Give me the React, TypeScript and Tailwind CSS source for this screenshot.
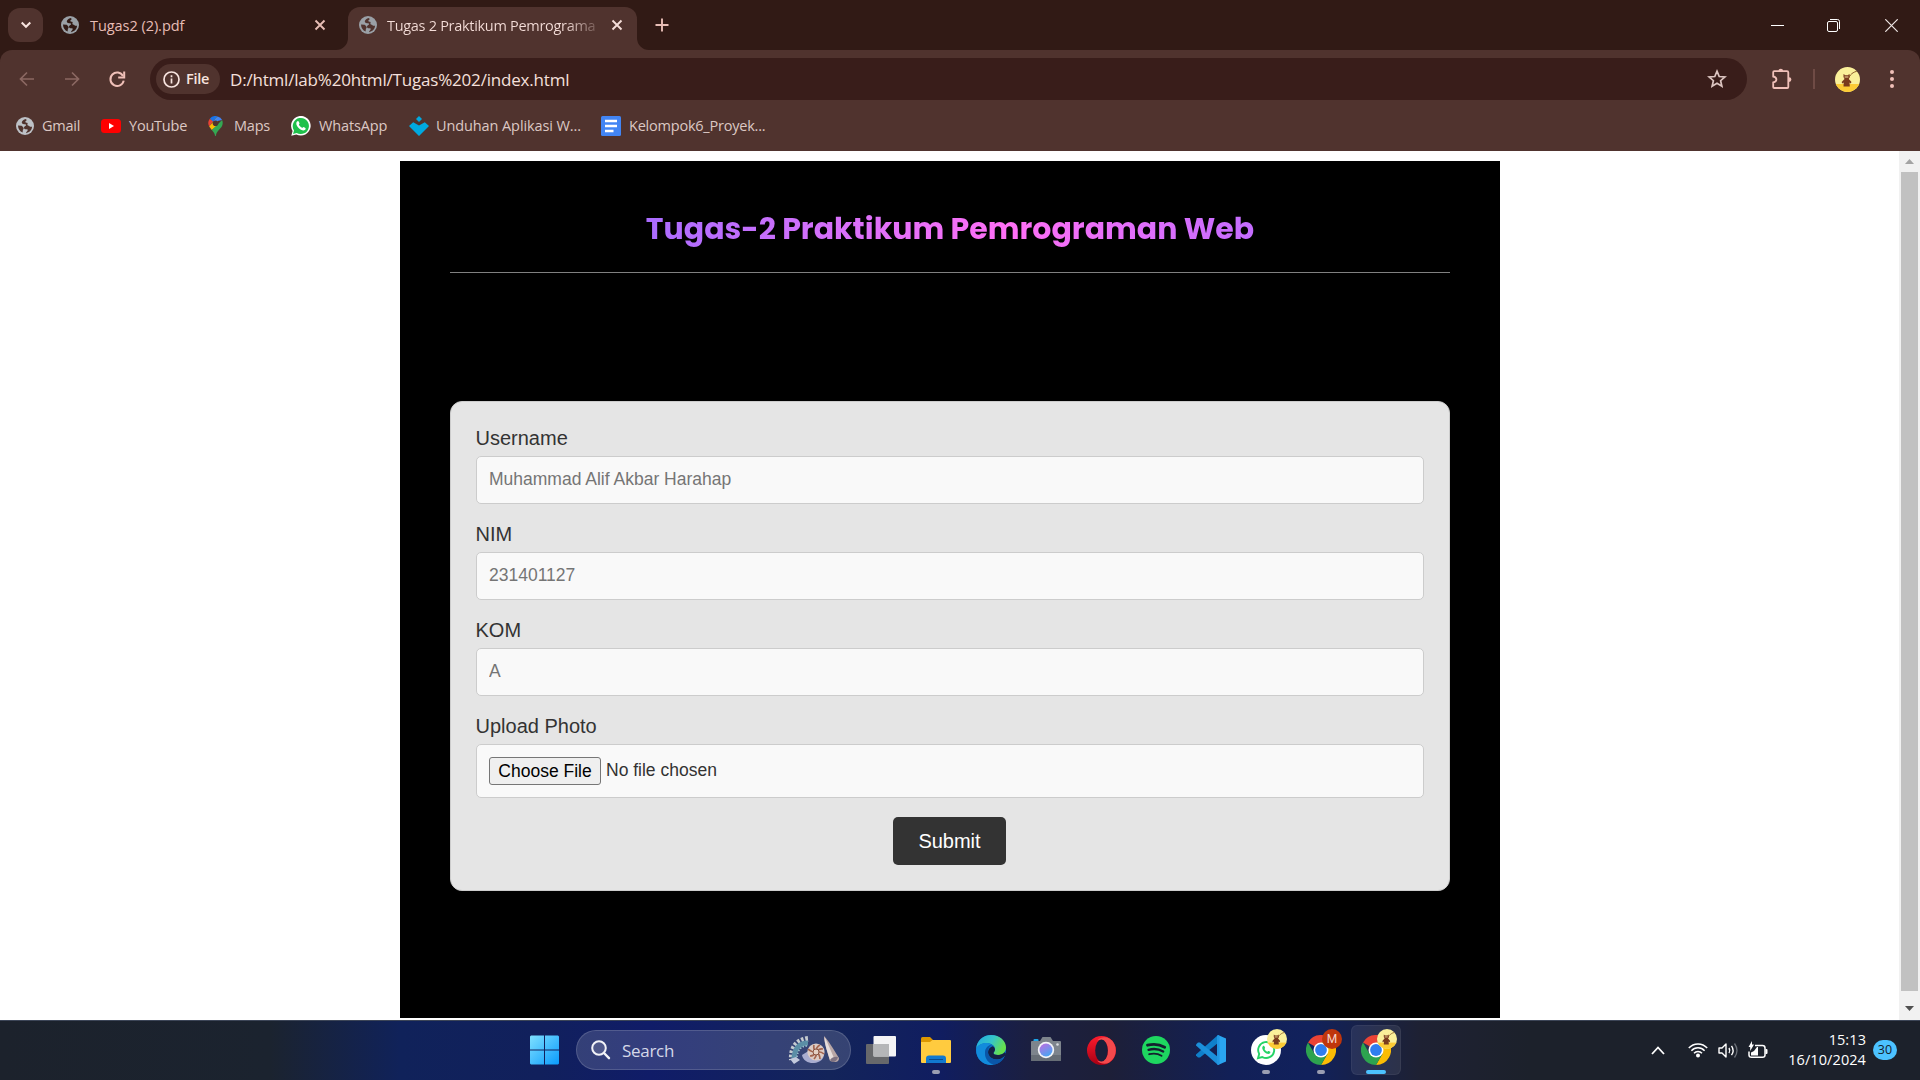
import React from "react";
import type { ReactNode } from "react";

const SEGOE = "font-['Open_Sans','Noto_Sans',sans-serif]";

function Globe({ color, hole, size = 18 }: { color: string; hole: string; size?: number }) {
  return (
    <svg width={size} height={size} viewBox="0 0 18 18" className="shrink-0">
      <circle cx="9" cy="9" r="9" fill={color} />
      <path
        d="M9.500 2C7 3 5.600 4.200 5.800 5.700c.2 1.500 2 1.500 3.300 1.600 1 .1 1.300.7.800 1.300-.8.700-1.900.9-1.900 2.200 0 1.100 1 1.500 2.300 1.500l1.400.3c.3 1-.6 1.700-1.300 2.500l-.4 1.100c2.500-.4 4.600-1.900 5.600-4.100l.5-2.400c-1.200.1-2 .1-2.700-.5-.6-.6-1.200-.3-1.800-.9-.6-.7.300-1.200 0-2-.4-.8-1.600-.3-2.200-1-.5-.8.900-1.600 1.500-2.300z"
        fill={hole}
      />
      <path d="M2 8.500l3.500.3c1 .3 1 1.300 1.800 1.800.7.500.3 1.600-.4 2.200l-.3 2.700C3.800 14.300 2.100 12 2 8.500z" fill={hole} />
    </svg>
  );
}

function CloseX({ color }: { color: string }) {
  return (
    <svg width="12" height="12" viewBox="0 0 12 12" className="shrink-0">
      <path d="M1.500 1.500l9 9M10.500 1.500l-9 9" stroke={color} strokeWidth="1.900" />
    </svg>
  );
}

function Avatar({ size }: { size: number }) {
  return (
    <svg width={size} height={size} viewBox="0 0 25 25" className="shrink-0">
      <defs>
        <clipPath id={"av" + size}>
          <circle cx="12.500" cy="12.500" r="12.500" />
        </clipPath>
      </defs>
      <g clipPath={`url(#av${size})`}>
        <rect width="25" height="25" fill="#faf09a" />
        <rect y="17" width="25" height="8" fill="#fccb35" />
        <path d="M12 14C15 7 18 5 23 4" fill="none" stroke="#8a5a2a" strokeWidth="1" />
        <path d="M8.500 7l1.500 1h3l1.500-1 .3 3-1 2 2.700 3-.8 1.500-1.200-1 .3 4H8.500l.2-4-1.500 1-.5-1.500 2.800-3-1-2z" fill="#7a3b1d" />
        <path d="M9.600 8.500h3.800v2.500H9.600z" fill="#b78a5c" />
      </g>
    </svg>
  );
}

function Tabs() {
  return (
    <div className={`${SEGOE} flex h-[50px] shrink-0 items-center bg-[#311a15] text-[15px]`}>
      <button className="ml-2 flex h-[34px] w-[35px] items-center justify-center rounded-[12px] bg-[#50332e]">
        <svg width="12" height="8" viewBox="0 0 12 8">
          <path d="M1.700 1.500L6 5.800l4.300-4.300" fill="none" stroke="#f8e4df" strokeWidth="2" />
        </svg>
      </button>
      <div className="ml-[18px] flex w-[269px] items-center">
        <Globe color="#9aa0a6" hole="#311a15" />
        <span className="ml-[11px] flex-1 pt-px text-[14.500px] tracking-[-0.050px] whitespace-nowrap text-[#e7bdb5]">Tugas2 (2).pdf</span>
        <span className="mr-[4px] flex">
          <CloseX color="#e7bdb5" />
        </span>
      </div>
      <div className="relative ml-[18px] flex h-[43px] w-[289px] items-center self-end rounded-t-[12px] bg-[#50332e]">
        <svg className="absolute bottom-0 -left-3" width="12" height="12" viewBox="0 0 12 12">
          <path d="M12 0v12H0A12 12 0 0 0 12 0z" fill="#50332e" />
        </svg>
        <svg className="absolute -right-3 bottom-0" width="12" height="12" viewBox="0 0 12 12">
          <path d="M0 0v12h12A12 12 0 0 1 0 0z" fill="#50332e" />
        </svg>
        <span className="-mt-[7px] ml-[11px] flex">
          <Globe color="#9aa0a6" hole="#50332e" />
        </span>
        <span className="-mt-[6px] ml-[10px] w-[210px] bg-linear-to-r from-[#f5ded9] from-85% to-[#f5ded9]/20 bg-clip-text text-[14.500px] tracking-[-0.300px] whitespace-nowrap text-transparent">
          Tugas 2 Praktikum Pemrograma
        </span>
        <span className="-mt-[7px] ml-[14px] flex">
          <CloseX color="#f5ded9" />
        </span>
      </div>
      <svg width="14" height="14" viewBox="0 0 14 14" className="ml-[18px]">
        <path d="M7 .5v13M.5 7h13" stroke="#e7bdb5" strokeWidth="1.900" />
      </svg>
      <div className="ml-auto flex items-center">
        <svg width="13" height="13" viewBox="0 0 13 13">
          <path d="M0 6.500h13" stroke="#fff" strokeWidth="1" />
        </svg>
        <svg width="13" height="13" viewBox="0 0 13 13" className="ml-[43px]">
          <rect x=".5" y="2.500" width="10" height="10" rx="1.500" fill="none" stroke="#fff" />
          <path d="M3 .5h7.500a2 2 0 0 1 2 2V10" fill="none" stroke="#fff" />
        </svg>
        <svg width="13" height="13" viewBox="0 0 13 13" className="mr-[22px] ml-[45px]">
          <path d="M.3.3l12.400 12.400M12.700.3L.3 12.700" stroke="#efe7e5" strokeWidth="1.200" />
        </svg>
      </div>
    </div>
  );
}

function Toolbar() {
  return (
    <div className={`${SEGOE} flex h-[58px] shrink-0 items-center rounded-t-[12px] bg-[#50332e]`}>
      <svg width="16" height="16" viewBox="0 0 16 16" className="ml-[19px]">
        <path d="M15 8H2M8 1.500L1.500 8 8 14.500" fill="none" stroke="#8b6862" strokeWidth="1.700" />
      </svg>
      <svg width="16" height="16" viewBox="0 0 16 16" className="ml-[29px]">
        <path d="M1 8h13M8 1.500L14.500 8 8 14.500" fill="none" stroke="#8b6862" strokeWidth="1.700" />
      </svg>
      <svg width="18" height="18" viewBox="0 0 18 18" className="ml-[28px]">
        <path d="M15 6A6.700 6.700 0 1 0 15.700 10.600" fill="none" stroke="#f0c0b8" strokeWidth="2" />
        <path d="M16.200 1.500v6h-6" fill="none" stroke="#f0c0b8" strokeWidth="2" />
      </svg>
      <div className="ml-[24px] flex h-[42px] w-[1597px] items-center rounded-full bg-[#391d1a]">
        <div className="ml-[6px] flex h-[30px] w-[64px] items-center rounded-full bg-[#50332e]">
          <svg width="17" height="17" viewBox="0 0 17 17" className="ml-[7px]">
            <circle cx="8.500" cy="8.500" r="7.500" fill="none" stroke="#f8e4df" strokeWidth="1.700" />
            <path d="M8.500 7.500v5M8.500 4.300v1.900" stroke="#f8e4df" strokeWidth="1.700" />
          </svg>
          <span className="ml-[6px] text-[14.500px] font-semibold tracking-[-0.300px] text-[#f8e4df]">File</span>
        </div>
        <span className="ml-[10px] pt-px text-[17px] tracking-[-0.190px] whitespace-nowrap text-[#f5e0dc]">D:/html/lab%20html/Tugas%202/index.html</span>
        <svg width="20" height="20" viewBox="0 0 20 20" className="mr-[20px] ml-auto">
          <path
            d="M10 2.200l2.200 5.300 5.700.5-4.300 3.700 1.300 5.600-4.900-3-4.900 3 1.300-5.600L2.100 8l5.700-.5z"
            fill="none"
            stroke="#dcc5c1"
            strokeWidth="1.700"
          />
        </svg>
      </div>
      <svg width="22" height="22" viewBox="0 0 22 22" className="ml-[24px]">
        <path
          d="M2.200 4.200q0-1 1-1H16q1.300 0 1.300 1.300V19q0 1-1 1H3.200q-1 0-1-1v-4.500c2.200-.5 3.200-1.600 3.200-3s-1-2.500-3.200-3z"
          fill="none"
          stroke="#f0c0b8"
          strokeWidth="1.800"
        />
        <path d="M7.500 3a2.300 2.300 0 0 1 4.600 0zM18 9.200a2.400 2.400 0 0 1 0 4.800z" fill="#f0c0b8" />
      </svg>
      <div className="ml-[20px] h-5 w-[2px] bg-[#6f4b45]" />
      <span className="ml-[20px] flex">
        <Avatar size={25} />
      </span>
      <svg width="4" height="20" viewBox="0 0 4 20" className="ml-[30px]">
        <circle cx="2" cy="3" r="2" fill="#f0c0b8" />
        <circle cx="2" cy="10" r="2" fill="#f0c0b8" />
        <circle cx="2" cy="17" r="2" fill="#f0c0b8" />
      </svg>
    </div>
  );
}

function Bookmark({ icon, label, className }: { icon: ReactNode; label: string; className: string }) {
  return (
    <div className={`flex items-center whitespace-nowrap ${className}`}>
      {icon}
      <span>{label}</span>
    </div>
  );
}

function Bookmarks() {
  return (
    <div className={`${SEGOE} flex h-[43px] shrink-0 items-center bg-[#50332e] pb-[7px] pl-4 text-[14.500px] tracking-[-0.220px] text-[#dcc8c4]`}>
      <Bookmark className="w-[85px] gap-[8px]" icon={<Globe color="#bdc1c6" hole="#50332e" />} label="Gmail" />
      <Bookmark
        className="w-[107px] gap-[8px]"
        label="YouTube"
        icon={
          <svg width="20" height="14" viewBox="0 0 20 14">
            <rect width="20" height="14" rx="3.500" fill="#f00" />
            <path d="M8 4l5 3-5 3z" fill="#fff" />
          </svg>
        }
      />
      <Bookmark
        className="w-[83px] gap-[11px]"
        label="Maps"
        icon={
          <svg width="15" height="20" viewBox="0 0 15 20">
            <path d="M1.800 2.800A7.200 7.200 0 0 1 9.700.4L4.900 6z" fill="#1a73e8" />
            <path d="M1.800 2.800L5 5.600 1.200 10.500A7.200 7.200 0 0 1 1.800 2.800z" fill="#ea4335" />
            <path d="M1.200 10.500l8-9.500L10 9l-6.200 5z" fill="#fbbc04" />
            <path d="M14.100 4.100c1 2.200.8 4.800-.6 6.800-2.400 3.200-5 4.500-5.500 8.500-.2.800-.8.800-1 0-.4-2-1.400-3.600-3.200-5.500z" fill="#34a853" />
            <path d="M14.100 4.100A7.200 7.200 0 0 0 9.700.4L5 6z" fill="#4285f4" />
            <circle cx="7.500" cy="7.300" r="2.800" fill="#50332e" />
          </svg>
        }
      />
      <Bookmark
        className="w-[118px] gap-[8px] tracking-[-0.150px]"
        label="WhatsApp"
        icon={
          <svg width="20" height="20" viewBox="0 0 20 20">
            <path d="M.3 19.700L1.600 15A9.800 9.800 0 1 1 5.300 18.400z" fill="#fff" />
            <path d="M2 18l1-3.600A8.100 8.100 0 1 1 5.700 17z" fill="#1fc14b" />
            <path d="M6 5.600c.7-.8 1.500-.7 1.800.1l.7 1.500c.2.500-.8 1.200-.6 1.600.8 1.500 1.800 2.400 3.300 3 .4.200 1-1 1.500-.8l1.700.9c.5.300.2 1.700-.6 2.200-1.500 1-4.300-.1-6.200-2C5.400 9.700 4.500 7.200 6 5.600z" fill="#fff" />
          </svg>
        }
      />
      <Bookmark
        className="w-[192px] gap-[7px] tracking-[-0.100px]"
        label="Unduhan Aplikasi W..."
        icon={
          <svg width="20" height="20" viewBox="0 0 20 20">
            <path d="M10 0l3 3-3 3-3-3z" fill="#00a9e0" />
            <path d="M0 10l4.200-3.700L10 9.500l5.800-3.200L20 10l-10 10z" fill="#00a9e0" />
          </svg>
        }
      />
      <Bookmark
        className="gap-[8px]"
        label="Kelompok6_Proyek..."
        icon={
          <svg width="20" height="20" viewBox="0 0 20 20">
            <rect width="20" height="20" rx="1.500" fill="#4285f4" />
            <path d="M4 5h12M4 10h12M4 15h8.500" stroke="#fff" strokeWidth="2.400" />
          </svg>
        }
      />
    </div>
  );
}

function Field({ label, placeholder }: { label: string; placeholder: string }) {
  return (
    <div className="mb-[18px] flex flex-col">
      <label className="-ml-[0.500px] h-[23px] text-[20px] leading-[25px]">{label}</label>
      <input
        className="mt-[7px] h-12 rounded-[5px] border border-[#ccc] bg-[#f9f9f9] px-3 pb-[2px] text-[17.500px] placeholder:text-[#757575]"
        placeholder={placeholder}
      />
    </div>
  );
}

function Page() {
  return (
    <div className="flex min-h-0 flex-1 bg-white">
      <main className="mt-[10px] ml-[400px] h-[857px] w-[1100px] bg-black px-[50px] font-['Liberation_Sans',Arial,sans-serif] text-[#333]">
        <div className="flex h-[112px] justify-center border-b border-[#808080] pt-[45px]">
          <h1 className="h-[45px] bg-linear-to-r from-[#aa6cff] via-[#ff6ff5] via-60% to-[#c46cff] bg-clip-text font-['Poppins','Inter',sans-serif] text-[30px] leading-[45px] font-bold whitespace-nowrap text-transparent">
            Tugas-2 Praktikum Pemrograman Web
          </h1>
        </div>
        <form className="mt-[128px] flex h-[490px] flex-col rounded-[12px] border border-[#ccc] bg-[#e5e5e5] px-[25px] pt-6">
          <Field label="Username" placeholder="Muhammad Alif Akbar Harahap" />
          <Field label="NIM" placeholder="231401127" />
          <Field label="KOM" placeholder="A" />
          <label className="-ml-[0.500px] h-[23px] text-[20px] leading-[25px]">Upload Photo</label>
          <div className="mt-[7px] flex h-[54px] items-center rounded-[5px] border border-[#ccc] bg-[#f9f9f9] px-3 text-[17.500px]">
            <button type="button" className="flex h-7 w-[112px] items-center justify-center rounded-[3px] border border-[#767676] bg-[#efefef] leading-5 whitespace-nowrap text-black">
              Choose File
            </button>
            <span className="-mt-[2px] ml-[5px] leading-5">No file chosen</span>
          </div>
          <button type="button" className="mt-[19px] mr-px h-12 w-[113px] self-center rounded-[5px] bg-[#333] text-[20px] text-white">
            Submit
          </button>
        </form>
      </main>
      <div className="ml-auto flex w-[21px] flex-col items-center bg-[#f1f1f1]">
        <svg width="9" height="5" viewBox="0 0 9 5" className="my-[8px] shrink-0">
          <path d="M0 5L4.500 0 9 5z" fill="#a3a3a3" />
        </svg>
        <div className="h-[819px] w-[17px] bg-[#c1c1c1]" />
        <svg width="9" height="5" viewBox="0 0 9 5" className="mt-[15px] shrink-0">
          <path d="M0 0h9L4.500 5z" fill="#505050" />
        </svg>
      </div>
    </div>
  );
}

function Chrome() {
  return (
    <svg width="30" height="30" viewBox="0 0 30 30">
      <path d="M15 15L2 7.500A15 15 0 0 1 28 7.500H15z" fill="#ea4335" />
      <path d="M15 15l6.500 3.700L15 30A15 15 0 0 0 28 7.500H15z" fill="#fbbc04" />
      <path d="M15 30A15 15 0 0 1 2 7.500l6.500 11.200L15 22.500l6.500-3.700z" fill="#2da34f" />
      <circle cx="15" cy="15" r="7.500" fill="#fff" />
      <circle cx="15" cy="15" r="5.900" fill="#2f7def" />
    </svg>
  );
}

function TaskItem({ children, badge, mark, active }: { children: ReactNode; badge?: ReactNode; mark?: boolean; active?: boolean }) {
  return (
    <div className={`relative flex h-[50px] w-[50px] items-center justify-center rounded-[6px] ${active ? "bg-white/8 ring-1 ring-white/5 ring-inset" : ""}`}>
      {children}
      {badge && <span className="absolute top-1 right-1 flex">{badge}</span>}
      {mark && <span className={`absolute bottom-[1px] h-1 rounded-full ${active ? "w-5 bg-[#4cc2ff]" : "w-2 bg-[#9a9eb2]"}`} />}
    </div>
  );
}

function Shells() {
  return (
    <svg width="54" height="30" viewBox="0 0 54 30">
      <path d="M21 4C10 5 4 13 5 25" fill="none" stroke="#c5cbd0" strokeWidth="6" strokeDasharray="2.500 1.600" />
      <path d="M21 8C12 8 7 14 7 25" fill="none" stroke="#5b8ea6" strokeWidth="5" />
      <path d="M20 11C14 11 11 15 10 22" fill="none" stroke="#9fc4cf" strokeWidth="1.500" strokeDasharray="1.500 1.500" />
      <path d="M3 24l6-2 4 3-6 4z" fill="#c3c9dc" />
      <path d="M15 20c1 6 7 8.500 12 8 6-.6 10-4 10-9L28 12z" fill="#a9add0" />
      <circle cx="29" cy="17" r="8.600" fill="#dccbc4" />
      <g stroke="#a3654f" strokeWidth="1.700" fill="none">
        <path d="M29 17q-3-3-2-7M29 17q0-5 4-7M29 17q3-4 7-3M29 17q5-1 8 2M29 17q4 2 4 7M29 17q1 4-2 7M29 17q-2 4-6 4M29 17q-5 0-8-3" />
      </g>
      <circle cx="29" cy="17" r="3" fill="#e3d0c4" stroke="#8a5340" />
      <path d="M37 1c4 4 10 14 15 22q0 4-4 4l-5-1C41 18 37 8 37 1z" fill="#b9a7a6" />
      <path d="M37.500 2c3 5 6 13 9.500 21l-4 2C40.500 17 37.500 9 37.500 2z" fill="#e6dddb" />
      <path d="M43 25q3-4 8-3-1 5-6 5z" fill="#7f7382" />
    </svg>
  );
}

function Taskbar() {
  return (
    <footer
      className={`${SEGOE} flex h-[60px] shrink-0 items-center border-t border-[#3c4557] bg-[linear-gradient(90deg,#1c222c_0px,#1b232f_270px,#10225a_400px,#11205c_540px,#101c68_650px,#13245a_830px,#101d60_940px,#1b1f40_1030px,#1d1f38_1110px,#122057_1230px,#11215c_1310px,#1e2133_1420px,#1c212b_1530px,#1c212b_1920px)] pb-px text-white`}
    >
      <svg width="30" height="30" viewBox="0 0 30 30" className="ml-[530px]">
        <defs>
          <linearGradient id="win" x1="0" y1="0" x2="1" y2="1">
            <stop offset="0" stopColor="#7fe0ff" />
            <stop offset="1" stopColor="#0a9bfc" />
          </linearGradient>
        </defs>
        <path d="M1 .5h13v14H0V1.500zM15 .5h13l1 1v13H15zM0 15.500h14v14H1l-1-1zM15 15.500h14v13l-1 1H15z" fill="url(#win)" />
      </svg>
      <div className="ml-[16px] flex h-10 w-[275px] items-center rounded-full border border-white/15 bg-white/15">
        <svg width="20" height="20" viewBox="0 0 20 20" className="ml-[14px]">
          <circle cx="8" cy="8" r="6.800" fill="#ffffff22" stroke="#f2f3f8" strokeWidth="2" />
          <path d="M13 13l5 5.200" stroke="#f2f3f8" strokeWidth="2.400" strokeLinecap="round" />
        </svg>
        <span className="ml-[11px] pt-px text-[17px] tracking-[-0.300px] text-[#d5d8e8]">Search</span>
        <span className="mr-[9px] ml-auto flex">
          <Shells />
        </span>
      </div>
      <div className="ml-[5px] flex items-center gap-[5px]">
        <TaskItem>
          <svg width="30" height="28" viewBox="0 0 30 28">
            <rect x="0" y="8" width="23" height="20" rx="1" fill="#67686b" />
            <rect x="7.500" y="0" width="22.500" height="20.500" rx="1" fill="#f4f4f5" />
            <path d="M7.500 8H23v12.500H7.500z" fill="#b5b6b8" />
          </svg>
        </TaskItem>
        <TaskItem mark>
          <svg width="30" height="26" viewBox="0 0 30 26">
            <path d="M0 1.500Q0 0 1.500 0h7.500l3.500 3.500L9 8H0z" fill="#dd9700" />
            <path d="M0 5h9l2.500-2H29q1 0 1 1v21q0 1-1 1H1q-1 0-1-1z" fill="#ffcb3f" />
            <path d="M5 26v-4.500q0-3 3-3h14q3 0 3 3V26z" fill="#1179cf" />
            <path d="M8 22.500h14" stroke="#0a4a8c" />
          </svg>
        </TaskItem>
        <TaskItem>
          <svg width="30" height="30" viewBox="0 0 30 30">
            <defs>
              <linearGradient id="e1" x1="0" y1="0" x2="1" y2=".4">
                <stop offset="0" stopColor="#1fa8e2" />
                <stop offset=".55" stopColor="#36c5c9" />
                <stop offset="1" stopColor="#66e04e" />
              </linearGradient>
            </defs>
            <circle cx="15" cy="15" r="15" fill="#0c6fc4" />
            <path d="M.2 13.500C1 5.500 7 0 15 0c9 0 15 6 15 12.500 0 5-4 7.500-8 7.500-3 0-4.500-1-4.500-2 0-1 1.500-1.500 1.500-4C19 10.500 15 8 10.500 8 5.500 8 1.500 10.500.2 13.500z" fill="url(#e1)" />
            <path d="M.2 13.500C1.500 10.500 5.500 8 10.500 8c2 0 4 .6 5.600 1.500C12 10 9 13.500 9 18c0 6 4 10.500 9 11.500C8 32-.8 24 .2 13.500z" fill="#128bdc" />
            <path d="M17.500 18c0 1 1.500 2 4.500 2 2.600 0 5-1 6.500-2.700l1.500 1.500-.6 1.400C27 23 24 24.500 20.500 24.500c-5 0-8.500-3-8.500-7 0-3 2-5.500 4.500-6.300 1.500.7 2.500 1.800 2.500 3.200 0 2-1.500 2.600-1.500 3.600z" fill="#152044" />
            <path d="M9 18c0-4.500 3-8 7-8.500-2.500 1.300-4 4-4 7 0 5 4.500 8 9.500 8 2.500 0 4.500-.7 6.500-1.800C25.500 27 21 29.500 18 29.500 13 28.500 9 24 9 18z" fill="#0a56a8" />
          </svg>
        </TaskItem>
        <TaskItem>
          <svg width="30" height="26" viewBox="0 0 30 26">
            <defs>
              <linearGradient id="lens" x1="0" y1="0" x2=".6" y2="1">
                <stop offset="0" stopColor="#c46ce0" />
                <stop offset="1" stopColor="#4ba4f2" />
              </linearGradient>
            </defs>
            <rect x="2.500" y="2" width="5" height="4" rx="1" fill="#1ba5e8" />
            <path d="M1 4h8l2.500-4h8L22 4h7q1 0 1 1v18q0 1-1 1H1q-1 0-1-1V5q0-1 1-1z" fill="#7d848c" />
            <path d="M0 18h30v5q0 1-1 1H1q-1 0-1-1z" fill="#676e76" />
            <circle cx="15" cy="13" r="8.200" fill="#f3f4f7" />
            <circle cx="15" cy="13" r="6.500" fill="url(#lens)" />
            <circle cx="26.500" cy="7.500" r="1.300" fill="#d9dce0" />
          </svg>
        </TaskItem>
        <TaskItem>
          <svg width="29" height="29" viewBox="0 0 29 29">
            <defs>
              <linearGradient id="op" x1="0" y1="0" x2="0" y2="1">
                <stop offset="0" stopColor="#ff1b2d" />
                <stop offset="1" stopColor="#a70014" />
              </linearGradient>
            </defs>
            <circle cx="14.500" cy="14.500" r="14.500" fill="url(#op)" />
            <path d="M10 4.500C13 1 18 .6 22 2.200A14.500 14.500 0 0 1 22 26.800C18 28.500 13 28 10 24.500c7 3 11-3 11-10s-4-13-11-10z" fill="#f5494c" />
            <ellipse cx="14.500" cy="14.500" rx="6.300" ry="11" fill="#1c1f3a" />
          </svg>
        </TaskItem>
        <TaskItem>
          <svg width="28" height="28" viewBox="0 0 28 28">
            <circle cx="14" cy="14" r="14" fill="#1ed760" />
            <g fill="none" stroke="#14202e" strokeLinecap="round">
              <path d="M5.500 9.200c6-1.600 12-1 17.200 2" strokeWidth="2.800" />
              <path d="M6.500 13.800c5-1.400 10.300-.9 14.700 1.700" strokeWidth="2.300" />
              <path d="M7.200 18.200c4.500-1.100 8.700-.7 12.300 1.500" strokeWidth="1.900" />
            </g>
          </svg>
        </TaskItem>
        <TaskItem>
          <svg width="30" height="30" viewBox="0 0 30 30">
            <path d="M22 0l8 3.500v23L22 30z" fill="#2aa5f0" />
            <path d="M22 0v8L4 22.500 2 22.500 0 20.500V19.500z" fill="#0f7fca" />
            <path d="M22 30v-8L4 7.500H2L0 9.500v1z" fill="#1b8fda" />
            <path d="M22 0l1.500 1V29L22 30l-1-1V1z" fill="#2196e3" />
          </svg>
        </TaskItem>
        <TaskItem mark badge={<Avatar size={20} />}>
          <svg width="30" height="30" viewBox="0 0 30 30">
            <circle cx="15" cy="15" r="15" fill="#fff" />
            <path d="M7 23.200l1.200-4.300A8 8 0 1 1 11.300 22z" fill="none" stroke="#25d366" strokeWidth="1.900" />
            <path d="M11.800 11.300c.7-.8 1.400-.6 1.700.1l.6 1.400c.2.500-.7 1-.5 1.400.6 1.200 1.500 1.900 2.700 2.500.4.100 1-.9 1.400-.7l1.500.8c.5.300.1 1.400-.6 1.800-1.300.8-3.700-.1-5.300-1.700-1.700-1.800-2.800-4.200-1.500-5.600z" fill="#25d366" />
          </svg>
        </TaskItem>
        <TaskItem
          mark
          badge={<span className="flex h-5 w-5 items-center justify-center rounded-full bg-[#bf360c] font-['Roboto',sans-serif] text-[12px] text-[#f5d5ca]">M</span>}
        >
          <Chrome />
        </TaskItem>
        <TaskItem mark active badge={<Avatar size={20} />}>
          <Chrome />
        </TaskItem>
      </div>
      <svg width="14" height="9" viewBox="0 0 14 9" className="ml-auto">
        <path d="M1 8l6-6.500L13 8" fill="none" stroke="#fff" strokeWidth="1.800" />
      </svg>
      <svg width="20" height="16" viewBox="0 0 20 16" className="ml-[23px]">
        <g fill="none" stroke="#fff" strokeWidth="1.500">
          <path d="M.8 6A12.500 12.500 0 0 1 19.200 6" />
          <path d="M3.400 8.700a9 9 0 0 1 13.200 0" />
          <path d="M6 11.300a5.400 5.400 0 0 1 8 0" />
        </g>
        <circle cx="10" cy="13.500" r="2" fill="#fff" />
      </svg>
      <svg width="21" height="17" viewBox="0 0 21 17" className="ml-[10px]">
        <path d="M1 6h3l4-4v13l-4-4H1z" fill="none" stroke="#fff" strokeWidth="1.400" strokeLinejoin="round" />
        <path d="M11 6q1.600 2.500 0 5M13.500 3.800q3.200 4.700 0 9.400" fill="none" stroke="#fff" strokeWidth="1.400" />
        <path d="M16.500 1.500q5 7 0 14" fill="none" stroke="#6b7078" strokeWidth="1.300" />
      </svg>
      <svg width="21" height="18" viewBox="0 0 21 18" className="ml-[9px]">
        <path d="M7 4.500h7.500q2.500 0 2.500 2.500v7q0 2.300-2.500 2.300h-11Q1 16.300 1 14v-3.500" fill="none" stroke="#fff" strokeWidth="1.500" />
        <path d="M17.500 8h1q1 0 1 1v3q0 1-1 1h-1z" fill="#fff" />
        <path d="M3 14.500v-3l3-1.500 3-4h1v8.500z" fill="#fff" />
        <path d="M4 0v3.500H6L2.200 10V6H.5z" fill="#fff" />
      </svg>
      <div className="ml-[19px] w-[78px] text-right text-[14.500px] leading-5 tracking-[0.080px] whitespace-nowrap">
        <div>15:13</div>
        <div>16/10/2024</div>
      </div>
      <div className="mr-[23px] ml-[7px] flex h-5 w-6 items-center justify-center rounded-full bg-[#4cc2ff] text-[12.500px] text-[#14202b]">30</div>
    </footer>
  );
}

export default function App() {
  return (
    <div className="flex h-[1080px] w-[1920px] flex-col overflow-hidden bg-[#311a15]">
      <Tabs />
      <Toolbar />
      <Bookmarks />
      <Page />
      <Taskbar />
    </div>
  );
}
